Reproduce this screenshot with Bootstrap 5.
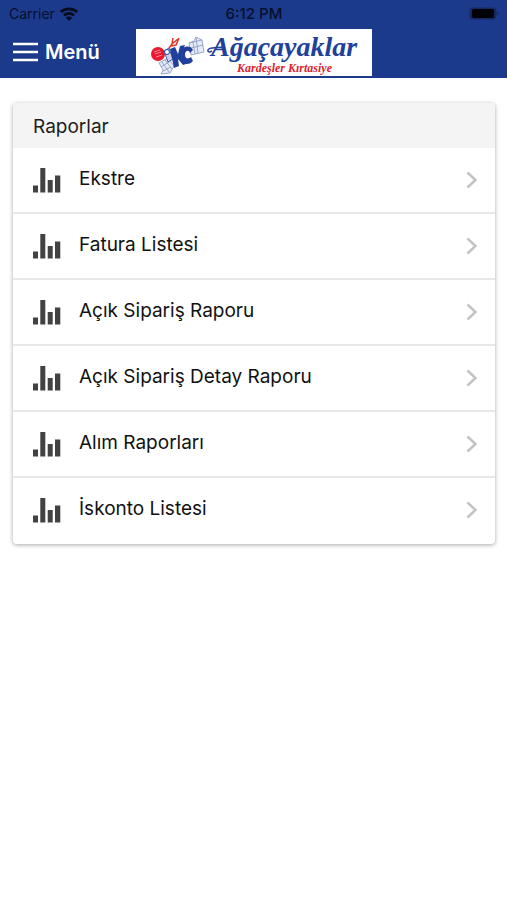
<!DOCTYPE html>
<html lang="tr">
<head>
<meta charset="utf-8">
<meta name="viewport" content="width=device-width, initial-scale=1">
<title>Raporlar</title>
<link href="https://cdn.jsdelivr.net/npm/bootstrap@5.3.0/dist/css/bootstrap.min.css" rel="stylesheet">
<style>
body { font-family: Inter, "Liberation Sans", sans-serif; color: #1c1c1c; background: #fff; }
.app-header { background: #1c3a8c; }
.split { display: grid; grid-template-columns: 1fr auto 1fr; align-items: center; }
.status { height: 28px; padding: 0 8px 0 9px; font-size: 14px; line-height: 28px; color: #06102c; }
.clock { font-size: 15px; font-weight: 500; }
.bar { height: 50px; padding: 0 12px 2px; }
.menu-btn { font-size: 20px; line-height: 24px; font-weight: 600; gap: 7px; }
.brand { width: 236px; height: 47px; background: #fff; }
.brand svg { display: block; }
.brand text { font-family: "Liberation Serif", serif; font-style: italic; font-weight: 700; }
.report-card { margin: 25px 12px 25px 13px; border-radius: 4px; box-shadow: 0 1px 4px rgba(0,0,0,.35); overflow: hidden; }
.report-title { background: #f4f4f4; height: 45px; padding: 0 20px; font-size: 19px; line-height: 47px; font-weight: 400; }
.report-row { height: 66px; padding: 0 18px 0 20px; gap: 18px; font-size: 19px; line-height: 24px; color: #111; border-bottom: 2px solid #e8e8e8; }
li:last-child .report-row { border-bottom-color: transparent; }
.report-name { padding-bottom: 2px; }
</style>
<script src="https://cdn.jsdelivr.net/npm/bootstrap@5.3.0/dist/js/bootstrap.bundle.min.js"></script>
</head>
<body>
<svg class="d-none" aria-hidden="true">
  <symbol id="bars" viewBox="0 0 28 26"><path fill="#424242" d="M0 18.500h5v7H0zM7.300 1h5v24.500h-5zM14.700 13h5v12.500h-5zM22 8.500h5.300v17H22z"/></symbol>
  <symbol id="chevron" viewBox="0 0 12 18"><path d="M2.500 1.500 10.500 9l-8 7.500" fill="none" stroke="#c2c2c2" stroke-width="2.400"/></symbol>
</svg>
<header class="app-header">
  <div class="status split">
    <div class="d-flex align-items-center gap-1"><span>Carrier</span>
      <svg width="20" height="15" viewBox="0 0 20 15" fill="none" stroke="#050b1c" stroke-width="2.800" aria-hidden="true"><path d="M1.800 5c4.500-4.300 11.900-4.300 16.400 0M5 8.400c2.800-2.600 7.200-2.600 10 0"/><path d="M10 14 6.800 10.800a4.600 4.600 0 0 1 6.400 0z" fill="#050b1c" stroke="none"/></svg>
    </div>
    <span class="clock">6:12 PM</span>
    <svg class="ms-auto" width="30" height="14" viewBox="0 0 30 14" role="img" aria-label="Pil dolu"><rect x=".5" y=".5" width="27" height="12" rx="4" fill="#15295f"/><rect x="3" y="2" width="22" height="9" rx="2" fill="#000208"/><path d="M28.500 4.500q3 2 0 4z" fill="#15295f"/></svg>
  </div>
  <nav class="bar split" aria-label="Ana menü">
    <button type="button" class="menu-btn btn p-0 border-0 text-white d-flex align-items-center">
      <svg width="26" height="20" viewBox="0 0 26 20" stroke="#fff" stroke-width="2.300" aria-hidden="true"><path d="M1 2h25M1 10h25M1 18h25"/></svg>Menü
    </button>
    <a class="brand" href="#">
      <svg width="236" height="47" viewBox="0 0 236 47" role="img" aria-label="Ağaçayaklar Kardeşler Kırtasiye">
        <g stroke="#8796c0" stroke-width=".8" fill="#e6eaf5"><path d="m23 34 9-5 6 8-4 7-9 1 2-4z"/><path d="m26 33 7 10m-4-12 7 9m-11-2 8-5m-6 9 8-4"/><path d="m53 14 5-2 2-4 6 3 2 12-13 3z"/><path d="m53 14 13-3m-9 2 2 12m-4-6 12-3M60 8l2 16"/></g>
        <path d="m33 19 3-4 6-5m-5-1-1 6m7-6-3 7-5 1" fill="none" stroke="#e4342c" stroke-width="1.500"/>
        <circle cx="22" cy="25" r="7" fill="#ea1830"/>
        <path d="m18 23 6-2m-5 4 6-2m-5 5 6-2" stroke="#ff8b91"/>
        <path d="m28 22 5-3 4 11-5 3z" fill="#c9d1e8" stroke="#20409c" stroke-width=".8"/>
        <path d="m34 20 5-2 3 7 2-8 5-1-4 10 8 8-6 2-5-6 1 7-5 2z" fill="#20409c"/>
        <path d="M57 21c-3-6-12-4-13 4-1 9 8 13 13 7l-2-4c-4 3-6 1-6-3 1-4 4-4 5-1z" fill="#20409c"/>
        <circle cx="31" cy="23" r="2.500" fill="#fff" stroke="#20409c"/>
        <path d="M76 22c-5 3-6-2 0-3 4-1 8 0 12-1" fill="none" stroke="#20409c" stroke-width="1.500"/>
        <text x="75" y="27" font-size="28" fill="#20409c">Ağaçayaklar</text>
        <text x="101" y="43" font-size="12" fill="#dc2330">Kardeşler Kırtasiye</text>
      </svg>
    </a>
  </nav>
</header>
<main>
  <section class="report-card bg-white" aria-labelledby="reports">
    <h1 class="report-title m-0" id="reports">Raporlar</h1>
    <ul class="list-unstyled m-0">
      <li><a href="#" class="report-row d-flex align-items-center text-decoration-none"><svg width="28" height="26" aria-hidden="true"><use href="#bars"/></svg><span class="report-name flex-grow-1">Ekstre</span><svg width="12" height="18" aria-hidden="true"><use href="#chevron"/></svg></a></li>
      <li><a href="#" class="report-row d-flex align-items-center text-decoration-none"><svg width="28" height="26" aria-hidden="true"><use href="#bars"/></svg><span class="report-name flex-grow-1">Fatura Listesi</span><svg width="12" height="18" aria-hidden="true"><use href="#chevron"/></svg></a></li>
      <li><a href="#" class="report-row d-flex align-items-center text-decoration-none"><svg width="28" height="26" aria-hidden="true"><use href="#bars"/></svg><span class="report-name flex-grow-1">Açık Sipariş Raporu</span><svg width="12" height="18" aria-hidden="true"><use href="#chevron"/></svg></a></li>
      <li><a href="#" class="report-row d-flex align-items-center text-decoration-none"><svg width="28" height="26" aria-hidden="true"><use href="#bars"/></svg><span class="report-name flex-grow-1">Açık Sipariş Detay Raporu</span><svg width="12" height="18" aria-hidden="true"><use href="#chevron"/></svg></a></li>
      <li><a href="#" class="report-row d-flex align-items-center text-decoration-none"><svg width="28" height="26" aria-hidden="true"><use href="#bars"/></svg><span class="report-name flex-grow-1">Alım Raporları</span><svg width="12" height="18" aria-hidden="true"><use href="#chevron"/></svg></a></li>
      <li><a href="#" class="report-row d-flex align-items-center text-decoration-none"><svg width="28" height="26" aria-hidden="true"><use href="#bars"/></svg><span class="report-name flex-grow-1">İskonto Listesi</span><svg width="12" height="18" aria-hidden="true"><use href="#chevron"/></svg></a></li>
    </ul>
  </section>
</main>
</body>
</html>
